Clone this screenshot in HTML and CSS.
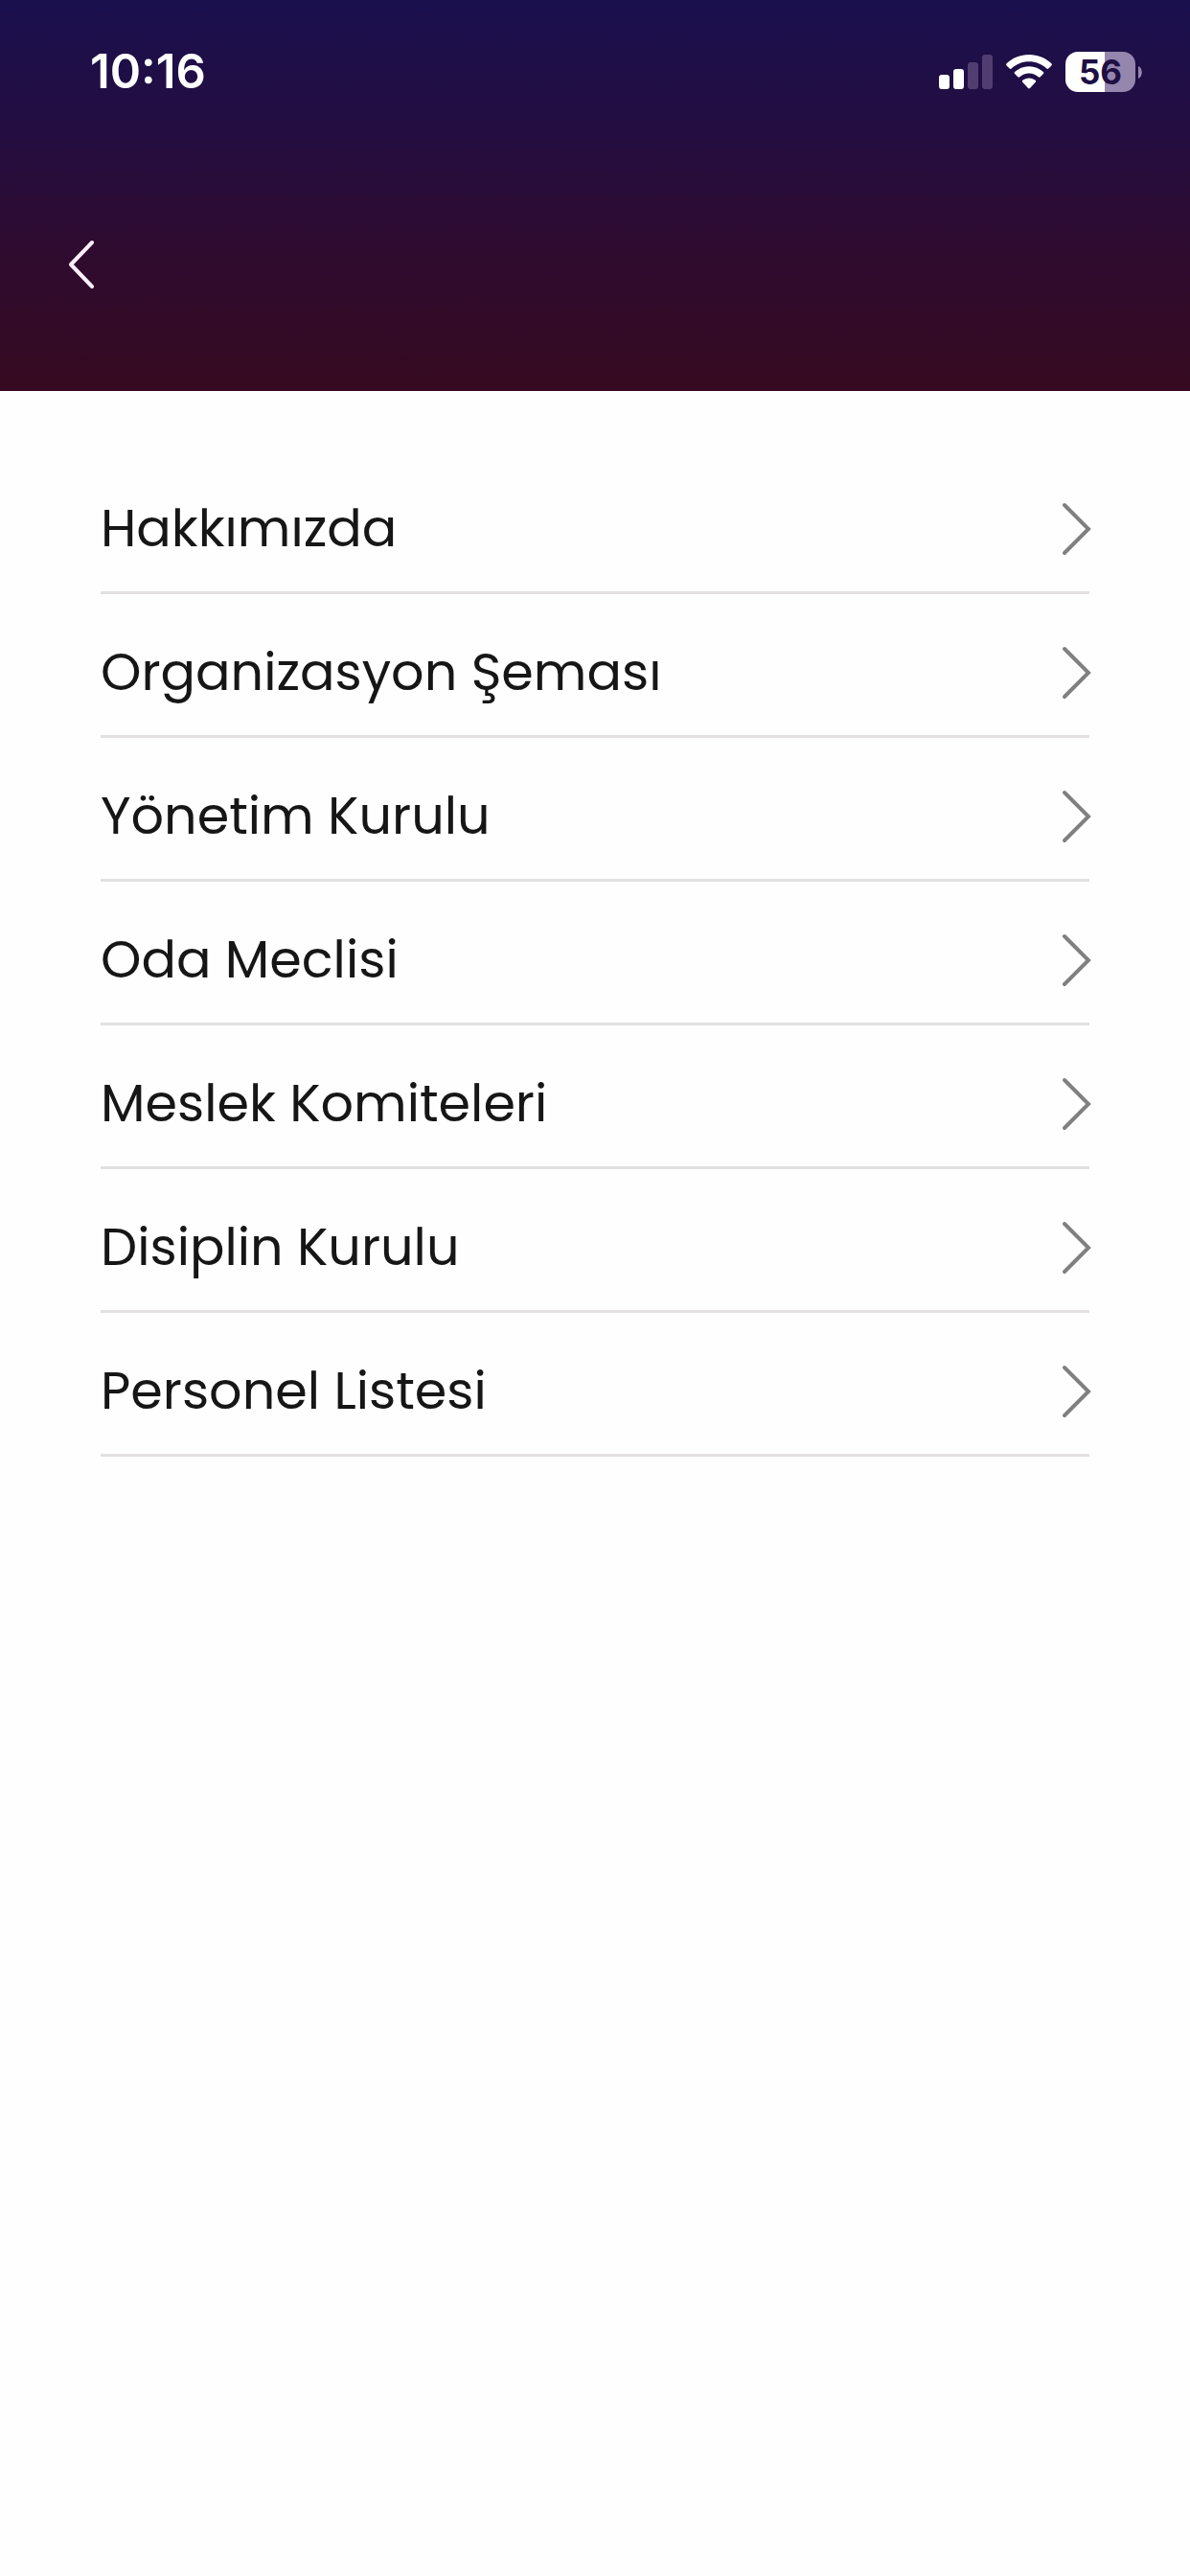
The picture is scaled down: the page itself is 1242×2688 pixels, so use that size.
FILE: index.html
```html
<!DOCTYPE html>
<html lang="tr">
<head>
    <meta charset="UTF-8">
    <meta name="viewport" content="width=device-width, initial-scale=1.0">
    <title>Kurumsal</title>
    <link rel="stylesheet" href="styles.css">
</head>
<body>
    <header class="header">
        <div class="status-bar">
            <span class="time">10:16</span>
            <div class="status-icons">
                <svg class="signal" viewBox="0 0 56 36" aria-hidden="true">
                    <rect x="0" y="21" width="11" height="15" rx="3"/>
                    <rect x="15" y="15" width="11" height="21" rx="3"/>
                    <rect class="off" x="30" y="8" width="11" height="28" rx="3"/>
                    <rect class="off" x="45" y="0" width="11" height="36" rx="3"/>
                </svg>
                <svg class="wifi" viewBox="0 0 48 36" aria-hidden="true">
                    <path d="M24 0C33.200 0 41.500 3.500 47.400 9.300C48 9.900 48 10.800 47.400 11.400L44.300 14.500C43.700 15.100 42.900 15.100 42.300 14.500C37.500 9.900 31.100 7.300 24 7.300S10.500 9.900 5.700 14.500C5.100 15.100 4.300 15.100 3.700 14.500L.6 11.400C0 10.800 0 9.900 .6 9.300C6.500 3.500 14.800 0 24 0Z"/>
                    <path d="M24 12.200C29.800 12.200 35 14.400 38.900 18C39.500 18.600 39.500 19.500 38.900 20.100L35.700 23.300C35.100 23.900 34.300 23.900 33.700 23.300C31.100 21 27.700 19.600 24 19.600S16.900 21 14.300 23.300C13.700 23.900 12.900 23.900 12.300 23.300L9.100 20.100C8.500 19.500 8.500 18.600 9.100 18C13 14.400 18.200 12.200 24 12.200Z"/>
                    <path d="M24 24.400C26.600 24.400 28.900 25.300 30.700 26.800C31.300 27.400 31.300 28.200 30.700 28.800L25 35C24.400 35.600 23.600 35.600 23 35L17.300 28.800C16.700 28.200 16.700 27.400 17.300 26.800C19.100 25.300 21.400 24.400 24 24.400Z"/>
                </svg>
                <div class="battery">
                    <span class="battery-level">56</span>
                    <svg class="battery-cap" viewBox="0 0 4 13" aria-hidden="true">
                        <path d="M0 0C5 2 5 11 0 13Z"/>
                    </svg>
                </div>
            </div>
        </div>
        <button class="back" type="button" aria-label="Geri">
            <svg viewBox="0 0 30 52" aria-hidden="true">
                <path d="M26 3L4 26L26 49"/>
            </svg>
        </button>
    </header>

    <main class="content">
        <ul class="menu">
            <li>
                <a class="menu-item" href="#hakkimizda">Hakkımızda
                    <svg class="arrow" viewBox="0 0 30 54" aria-hidden="true"><path d="M4 2L29 27L4 52"/></svg>
                </a>
            </li>
            <li>
                <a class="menu-item" href="#organizasyon">Organizasyon Şeması
                    <svg class="arrow" viewBox="0 0 30 54" aria-hidden="true"><path d="M4 2L29 27L4 52"/></svg>
                </a>
            </li>
            <li>
                <a class="menu-item" href="#yonetim">Yönetim Kurulu
                    <svg class="arrow" viewBox="0 0 30 54" aria-hidden="true"><path d="M4 2L29 27L4 52"/></svg>
                </a>
            </li>
            <li>
                <a class="menu-item" href="#meclis">Oda Meclisi
                    <svg class="arrow" viewBox="0 0 30 54" aria-hidden="true"><path d="M4 2L29 27L4 52"/></svg>
                </a>
            </li>
            <li>
                <a class="menu-item" href="#komiteler">Meslek Komiteleri
                    <svg class="arrow" viewBox="0 0 30 54" aria-hidden="true"><path d="M4 2L29 27L4 52"/></svg>
                </a>
            </li>
            <li>
                <a class="menu-item" href="#disiplin">Disiplin Kurulu
                    <svg class="arrow" viewBox="0 0 30 54" aria-hidden="true"><path d="M4 2L29 27L4 52"/></svg>
                </a>
            </li>
            <li>
                <a class="menu-item" href="#personel">Personel Listesi
                    <svg class="arrow" viewBox="0 0 30 54" aria-hidden="true"><path d="M4 2L29 27L4 52"/></svg>
                </a>
            </li>
        </ul>
    </main>
</body>
</html>
```

FILE: styles.css
```css
* {
    margin: 0;
    padding: 0;
    box-sizing: border-box;
}

body {
    min-height: 100vh;
    background: #fefefe;
    color: #161616;
    font-family: Poppins, Inter, "Open Sans", sans-serif;
}

.header {
    padding: 44px 50px 106px 70px;
    background: linear-gradient(#1a104e, #240d40 35%, #2e0b30 62%, #360a20);
}

.status-bar {
    display: flex;
    align-items: center;
    justify-content: space-between;
    height: 62px;
    padding-left: 24px;
    color: #fff;
    font-family: Inter, "Open Sans", sans-serif;
}

.time {
    font-size: 49px;
    font-weight: 600;
    line-height: 62px;
}

.status-icons {
    display: flex;
    align-items: center;
    gap: 14px;
}

.status-icons svg {
    fill: #fff;
}

.signal {
    width: 56px;
    height: 36px;
}

.signal .off {
    fill: #513d70;
}

.wifi {
    width: 48px;
    height: 36px;
}

.battery {
    display: flex;
    align-items: center;
    gap: 3px;
}

.battery-level {
    width: 73px;
    height: 42px;
    border-radius: 13px;
    background: linear-gradient(90deg, #fff 56%, #9486ac 56%);
    color: #1e0f44;
    font-size: 35px;
    font-weight: 700;
    line-height: 42px;
    text-align: center;
}

.battery-cap {
    width: 4px;
    height: 13px;
}

.status-icons .battery-cap {
    fill: #9486ac;
}

.back {
    display: block;
    margin-top: 144px;
    border: none;
    background: none;
    cursor: pointer;
}

.back svg {
    display: block;
    width: 30px;
    height: 52px;
    fill: none;
    stroke: #fceefc;
    stroke-width: 4;
    stroke-linecap: round;
    stroke-linejoin: round;
}

.content {
    padding: 78px 105px;
}

.menu {
    display: flex;
    flex-direction: column;
    gap: 16px;
    list-style: none;
}

.menu-item {
    display: flex;
    align-items: center;
    justify-content: space-between;
    padding: 30px 0;
    border-bottom: 3px solid #e2e0e1;
    color: inherit;
    font-size: 54px;
    line-height: 71px;
    text-decoration: none;
}

.arrow {
    width: 30px;
    height: 54px;
    overflow: visible;
    fill: none;
    stroke: #808080;
    stroke-width: 4;
    stroke-linecap: round;
}
```
